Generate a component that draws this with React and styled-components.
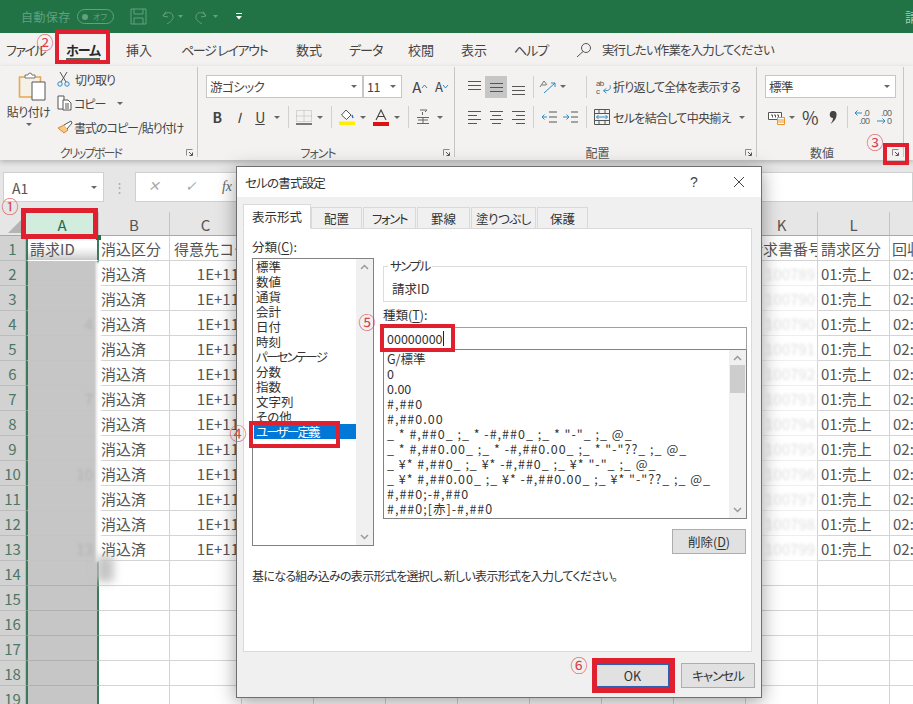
import React from 'react';
import styled, { createGlobalStyle } from 'styled-components';

const UI_FONT = '"Noto Sans CJK JP", "Noto Sans", sans-serif';

const GlobalStyle = createGlobalStyle`
    html, body {
        margin: 0;
        padding: 0;
        background: #fff;
    }
    body {
        font-family: ${UI_FONT};
        font-feature-settings: "palt";
        color: #333;
    }
`;

const Page = styled.div`
    position: relative;
    width: 913px;
    height: 704px;
    overflow: hidden;
`;

/* ---------- title bar ---------- */
const TitleBar = styled.div`
    display: flex;
    align-items: center;
    height: 33px;
    padding-left: 21px;
    box-sizing: border-box;
    background: #217346;
    color: #62a080;
    font-size: 12px;
`;

const AutoSave = styled.span`
    width: 56px;
    letter-spacing: 0.4px;
`;

const Toggle = styled.span`
    display: flex;
    align-items: center;
    gap: 5px;
    width: 37px;
    height: 15px;
    box-sizing: border-box;
    border: 1px solid #62a080;
    border-radius: 8px;
    padding-left: 4px;
    font-size: 8px;
    &::before {
        content: '';
        width: 6px;
        height: 6px;
        border-radius: 50%;
        background: #62a080;
    }
`;

const TitleSlot = styled.span`
    display: flex;
    justify-content: center;
    width: ${p => p.$w}px;
`;

const DocName = styled.span`
    margin-left: auto;
    width: 8px;
    overflow: hidden;
    white-space: nowrap;
    color: #a9cdb9;
    font-size: 13px;
`;

/* ---------- ribbon tabs ---------- */
const TabBar = styled.div`
    display: flex;
    align-items: center;
    height: 33px;
    background: #f3f2f1;
    font-size: 13px;
    color: #444;
    white-space: nowrap;
`;

const RibbonTab = styled.span`
    position: relative;
    width: ${p => p.$w}px;
    padding-left: ${p => p.$pad || 0}px;
    box-sizing: border-box;
    letter-spacing: ${p => p.$ls || 0}px;
    font-weight: ${p => (p.$active ? 700 : 400)};
    color: ${p => (p.$active ? '#2a2a2a' : '#444')};
    ${p => p.$active && `
        &::after {
            content: '';
            position: absolute;
            left: 0;
            bottom: -1px;
            width: 34px;
            height: 2px;
            background: #4d6b5c;
        }
    `}
`;

const SearchHint = styled.span`
    margin-left: 10px;
    font-size: 12.5px;
    letter-spacing: -0.9px;
    color: #444;
`;

/* ---------- ribbon ---------- */
const Ribbon = styled.div`
    display: flex;
    height: 94px;
    padding-top: 1px;
    box-sizing: border-box;
    background: #f3f2f1;
    box-shadow: 0 2px 5px rgba(0, 0, 0, 0.22);
    position: relative;
`;

const Group = styled.div`
    display: flex;
    flex-direction: column;
    width: ${p => p.$w}px;
    height: 90px;
    box-sizing: border-box;
    border-right: 1px solid #c8c6c4;
`;

const GroupBody = styled.div`
    flex: 1;
    min-height: 0;
    display: ${p => (p.$split ? 'flex' : 'block')};
    padding: ${p => (p.$split ? '0' : '8px 0 0 8px')};
`;

const GroupFoot = styled.div`
    display: flex;
    align-items: center;
    height: 18px;
    margin-bottom: -4px;
    font-size: 12px;
    color: #555;
`;

const GroupLabel = styled.span`
    flex: 1;
    text-align: center;
    letter-spacing: ${p => p.$ls || 0}px;
`;

const Launcher = styled.span`
    display: flex;
    justify-content: flex-start;
    width: 16px;
    padding-left: 5px;
    box-sizing: border-box;
`;

const ToolRow = styled.div`
    display: flex;
    align-items: center;
    height: ${p => p.$h || 22}px;
    margin-top: ${p => p.$mt || 0}px;
    font-size: 12px;
    letter-spacing: -0.7px;
    color: #444;
    white-space: nowrap;
`;

const Cell = styled.span`
    display: flex;
    align-items: center;
    justify-content: center;
    flex: none;
    width: ${p => p.$w}px;
    height: 22px;
    background: ${p => (p.$on ? '#c6c6c6' : 'transparent')};
    font-size: ${p => p.$size || 13}px;
    font-weight: ${p => (p.$bold ? 700 : 400)};
    font-style: ${p => (p.$italic ? 'italic' : 'normal')};
    text-decoration: ${p => (p.$under ? 'underline' : 'none')};
    color: #444;
`;

const Caret = styled.span`
    display: inline-block;
    flex: none;
    margin-left: ${p => p.$ml || 0}px;
    border-left: 3px solid transparent;
    border-right: 3px solid transparent;
    border-top: 3px solid #666;
`;

const RowSep = styled.span`
    width: 1px;
    height: 22px;
    background: #d2d0ce;
`;

const Combo = styled.span`
    display: flex;
    align-items: center;
    flex: none;
    width: ${p => p.$w}px;
    height: 23px;
    margin-right: ${p => p.$mr || 0}px;
    padding: 0 5px 0 3px;
    box-sizing: border-box;
    border: 1px solid #c6c6c6;
    background: #fff;
    font-size: 12.5px;
    letter-spacing: -0.5px;
    color: #444;
    & > span:first-child {
        flex: 1;
    }
`;

const PasteColumn = styled.div`
    display: flex;
    flex-direction: column;
    align-items: center;
    width: 57px;
    padding-top: 5px;
    font-size: 12px;
    letter-spacing: -0.6px;
    color: #444;
    & > svg {
        margin-left: 6px;
    }
    & > span {
        margin-top: 2px;
        line-height: 18px;
    }
`;

const ClipColumn = styled.div`
    padding-top: 0;
`;

const ClipRow = styled.div`
    display: flex;
    align-items: center;
    height: 24px;
    font-size: 12px;
    letter-spacing: -1px;
    color: #444;
    white-space: nowrap;
    & > svg {
        flex: none;
        margin-right: ${p => p.$gap || 3}px;
    }
`;

/* ---------- formula bar ---------- */
const FormulaBar = styled.div`
    display: flex;
    align-items: center;
    height: 52px;
    padding: 1px 0 0 3px;
    box-sizing: border-box;
    background: #e6e6e6;
`;

const NameBox = styled.div`
    display: flex;
    align-items: center;
    justify-content: space-between;
    width: 101px;
    height: 30px;
    padding: 2px 6px 0 8px;
    box-sizing: border-box;
    border: 1px solid #d0d0d0;
    background: #fff;
    font-size: 14px;
    color: #555;
`;

const BarDots = styled.span`
    width: 31px;
    text-align: center;
    color: #aaa;
    font-size: 13px;
`;

const FormulaInput = styled.div`
    flex: 1;
    display: flex;
    align-items: center;
    height: 30px;
    box-sizing: border-box;
    border: 1px solid #d0d0d0;
    background: #fff;
`;

const FormulaButton = styled.span`
    display: flex;
    justify-content: center;
    width: ${p => p.$w}px;
    color: ${p => (p.$dark ? '#666' : '#aaa')};
    font-family: "Liberation Serif", serif;
    font-size: 14px;
    font-style: italic;
`;

/* ---------- sheet ---------- */
const Sheet = styled.div`
    display: grid;
    grid-template-columns: 26px 73px 71px repeat(11, 72px);
    grid-auto-rows: 25px;
    font-feature-settings: normal;
    font-size: 15px;
    color: #555;
    background: #fff;
`;

const ColHead = styled.div`
    height: 24px;
    line-height: 26px;
    box-sizing: border-box;
    text-align: center;
    background: ${p => (p.$active ? '#d2ecdd' : '#e6e6e6')};
    color: ${p => (p.$active ? '#1f6b47' : '#555')};
    border-right: 1px solid #c4c4c4;
    border-bottom: 1px solid #a8a8a8;
`;

const Corner = styled.div`
    position: relative;
    height: 24px;
    box-sizing: border-box;
    background: #e6e6e6;
    border-right: 1px solid #c4c4c4;
    border-bottom: 1px solid #a8a8a8;
    &::after {
        content: '';
        position: absolute;
        right: 3px;
        bottom: 2px;
        width: 14px;
        height: 14px;
        background: #b4b4b4;
        clip-path: polygon(100% 0, 100% 100%, 0 100%);
    }
`;

const RowHead = styled.div`
    box-sizing: border-box;
    line-height: 25px;
    text-align: center;
    margin-top: -1px;
    height: 25px;
    background: #d2d2d2;
    color: #4d7765;
    border-right: 1px solid #b8b8b8;
    border-bottom: 1px solid #bcbcbc;
`;

const DataCell = styled.div`
    margin-top: -1px;
    height: 25px;
    box-sizing: border-box;
    padding: 0 2px 0 ${p => p.$pad || 2}px;
    line-height: 25px;
    overflow: hidden;
    white-space: nowrap;
    text-align: ${p => (p.$right ? 'right' : 'left')};
    border-right: 1px solid #d4d4d4;
    border-bottom: 1px solid ${p => (p.$faint ? '#efefef' : '#d4d4d4')};
    color: ${p => (p.$faint ? '#e0e0e0' : '#555')};
`;

const FaintText = styled.span`
    filter: blur(1.4px);
`;

const SelectedCell = styled.div`
    margin-top: -1px;
    height: 25px;
    box-sizing: border-box;
    padding: 0 4px 0 2px;
    line-height: 25px;
    text-align: ${p => (p.$right ? 'right' : 'left')};
    border-left: 2px solid #3d7a5d;
    border-right: 2px solid #3d7a5d;
    border-bottom: 1px solid ${p => (p.$head ? 'transparent' : p.$dark ? '#b0b0b0' : '#c4c4c4')};
    background: ${p => (p.$head ? 'linear-gradient(#fff 45%, #e8e8e8 72%, #c8c8c8)' : '#c6c6c6')};
    color: ${p => (p.$head ? '#555' : '#b2b2b2')};
`;

const BlurPatch = styled.div`
    position: absolute;
    left: ${p => p.$x}px;
    top: ${p => p.$y}px;
    width: ${p => p.$w}px;
    height: ${p => p.$h}px;
    background: ${p => p.$color};
    filter: blur(${p => p.$blur}px);
    pointer-events: none;
`;

const FillHandle = styled.div`
    position: absolute;
    left: 96px;
    top: 235px;
    width: 5px;
    height: 5px;
    background: #217346;
`;

/* ---------- dialog ---------- */
const Dialog = styled.div`
    position: absolute;
    left: 236px;
    top: 166px;
    width: 526px;
    height: 532px;
    display: flex;
    flex-direction: column;
    box-sizing: border-box;
    border: 1px solid #6f6f6f;
    background: #f0f0f0;
    box-shadow: 0 4px 18px rgba(0, 0, 0, 0.38);
    font-size: 12.5px;
    color: #333;
`;

const DialogTitle = styled.div`
    display: flex;
    align-items: center;
    height: 30px;
    padding-left: 8px;
    background: #fff;
    font-size: 12.5px;
`;

const TitleText = styled.span`
    flex: 1;
    letter-spacing: -0.8px;
`;

const TitleButton = styled.span`
    display: flex;
    justify-content: center;
    width: ${p => p.$w}px;
    font-size: 14px;
    font-family: "Liberation Sans", sans-serif;
    color: #444;
`;

const TabStrip = styled.div`
    display: flex;
    align-items: flex-end;
    height: 23px;
    margin: 9px 0 -1px 6px;
    position: relative;
    z-index: 1;
`;

const DlgTab = styled.span`
    display: flex;
    align-items: center;
    justify-content: center;
    width: ${p => p.$w}px;
    height: ${p => (p.$active ? 25 : 22)}px;
    box-sizing: border-box;
    margin-right: ${p => (p.$active ? 0 : 1)}px;
    border: 1px solid #d9d9d9;
    border-bottom: ${p => (p.$active ? '1px solid #fff' : '1px solid #d9d9d9')};
    background: ${p => (p.$active ? '#fff' : '#f0f0f0')};
    font-size: 12.5px;
    letter-spacing: ${p => p.$ls || 0}px;
`;

const TabPanel = styled.div`
    height: 424px;
    margin: 0 9px 0 6px;
    padding: 9px 5px 0 8px;
    box-sizing: border-box;
    border: 1px solid #d9d9d9;
    background: #fff;
`;

const PanelColumns = styled.div`
    display: flex;
    gap: 9px;
`;

const CategoryColumn = styled.div`
    width: 122px;
    flex: none;
`;

const FormatColumn = styled.div`
    width: 364px;
    padding-top: 19px;
    flex: none;
`;

const FieldLabel = styled.div`
    height: 18px;
    margin-top: ${p => p.$mt || 0}px;
    margin-bottom: ${p => p.$mb || 0}px;
    line-height: 18px;
    font-size: 12.5px;
    & u {
        text-underline-offset: 2px;
    }
`;

const ListFrame = styled.div`
    display: flex;
    height: ${p => p.$h}px;
    box-sizing: border-box;
    border: 1px solid #828282;
    border-top: ${p => (p.$flat ? 'none' : '1px solid #828282')};
    background: #fff;
`;

const ListItems = styled.div`
    flex: 1;
    min-width: 0;
    overflow: hidden;
    padding-top: ${p => p.$pt || 0}px;
`;

const ListItem = styled.div`
    height: 15px;
    line-height: 15px;
    padding-left: ${p => p.$pad}px;
    margin-left: ${p => p.$ml || 0}px;
    font-size: 12.5px;
    letter-spacing: ${p => p.$ls || 0}px;
    white-space: nowrap;
    background: ${p => (p.$selected ? '#0078d7' : 'transparent')};
    color: ${p => (p.$selected ? '#fff' : '#333')};
`;

const ScrollBar = styled.div`
    display: flex;
    flex-direction: column;
    align-items: center;
    flex: none;
    width: 17px;
    background: #f0f0f0;
    padding: 5px 0;
    box-sizing: border-box;
`;

const ScrollThumb = styled.div`
    width: 15px;
    height: 28px;
    margin-top: 4px;
    background: #cdcdcd;
`;

const ScrollSpacer = styled.div`
    flex: 1;
`;

const SampleBox = styled.fieldset`
    height: 45px;
    margin: 0;
    padding: 5px 8px 0 8px;
    box-sizing: border-box;
    border: 1px solid #dcdcdc;
    line-height: 18px;
    font-size: 12.5px;
    & legend {
        margin-left: -4px;
        padding: 0 2px;
        line-height: 18px;
        letter-spacing: -1.5px;
    }
`;

const FormatInput = styled.div`
    display: flex;
    align-items: center;
    height: 23px;
    padding-left: 3px;
    box-sizing: border-box;
    border: 1px solid #a0a0a0;
    border-bottom: 1px solid #828282;
    background: #fff;
    font-size: 12.5px;
    font-feature-settings: normal;
    &::after {
        content: '';
        width: 1px;
        height: 15px;
        background: #222;
    }
`;

const DeleteRow = styled.div`
    display: flex;
    justify-content: flex-end;
    padding: 10px 1px 0 0;
`;

const DlgButton = styled.span`
    display: flex;
    align-items: center;
    justify-content: center;
    width: ${p => p.$w}px;
    height: 25px;
    box-sizing: border-box;
    border: ${p => (p.$primary ? '2px solid #2f5fae' : '1px solid #adadad')};
    background: #e1e1e1;
    box-shadow: ${p => (p.$primary ? 'inset 0 0 0 1px #c8e4f8' : 'none')};
    font-size: 12.5px;
    letter-spacing: ${p => p.$ls || 0}px;
    & u {
        text-underline-offset: 2px;
    }
`;

const Hint = styled.p`
    margin: 13px 0 0;
    line-height: 18px;
    font-size: 12px;
    letter-spacing: -0.7px;
`;

const DialogFoot = styled.div`
    display: flex;
    justify-content: flex-end;
    gap: 11px;
    padding: 11px 6px 0 0;
`;

/* ---------- annotations ---------- */
const RedBox = styled.div`
    position: absolute;
    left: ${p => p.$x}px;
    top: ${p => p.$y}px;
    width: ${p => p.$w}px;
    height: ${p => p.$h}px;
    box-sizing: border-box;
    border: ${p => p.$b || 4}px solid #e0202e;
    pointer-events: none;
`;

const Marker = styled.span`
    position: absolute;
    left: ${p => p.$x}px;
    top: ${p => p.$y}px;
    width: 18px;
    height: 18px;
    line-height: 18px;
    text-align: center;
    font-size: 17px;
    font-feature-settings: normal;
    color: #d8434a;
    pointer-events: none;
`;

/* ---------- icons ---------- */
const Ic = ({ w, h, children, ...rest }) => (
    <svg width={w} height={h} viewBox={`0 0 ${w} ${h}`} fill="none" {...rest}>{children}</svg>
);

const SaveIcon = () => (
    <Ic w={17} h={17}>
        <path d="M1 1h15v15H1zM4 1v5h9V1M4 16v-6h9v6" stroke="#62a080" />
    </Ic>
);
const UndoIcon = () => (
    <Ic w={16} h={16}>
        <path d="M4 7l3-4.500M4 7l5 1M4 7c2-4 9-5 10 0 .6 4-3 6-6 8" stroke="#62a080" />
    </Ic>
);
const RedoIcon = () => (
    <Ic w={16} h={16} style={{ transform: 'scaleX(-1)' }}>
        <path d="M4 7l3-4.500M4 7l5 1M4 7c2-4 9-5 10 0 .6 4-3 6-6 8" stroke="#62a080" />
    </Ic>
);
const DimCaret = () => (
    <Ic w={5} h={3}><path d="M0 0h5L2.500 3z" fill="#62a080" /></Ic>
);
const CustomizeIcon = () => (
    <Ic w={6} h={7}>
        <path d="M0 .5h6" stroke="#fff" />
        <path d="M0 3h6L3 6.500z" fill="#fff" />
    </Ic>
);
const SearchIcon = () => (
    <Ic w={16} h={16}>
        <circle cx="10" cy="6" r="4.500" stroke="#555" />
        <path d="M7 9.500l-6 5.500" stroke="#555" />
    </Ic>
);
const PasteIcon = () => (
    <Ic w={28} h={29}>
        <path d="M1.500 5h21v20h-21z" fill="#f6f1e6" stroke="#e8a84c" strokeWidth="1.600" />
        <path d="M7 6V3h3a2 2 0 0 1 4 0h3v3z" fill="#fff" stroke="#777" />
        <path d="M14 10h13v18H14z" fill="#fff" stroke="#555" />
    </Ic>
);
const ScissorsIcon = () => (
    <Ic w={13} h={16}>
        <path d="M3 1l6 10M10 1L4 11" stroke="#555" />
        <circle cx="3" cy="13" r="2.200" stroke="#2b8cc4" />
        <circle cx="10" cy="13" r="2.200" stroke="#2b8cc4" />
    </Ic>
);
const CopyIcon = () => (
    <Ic w={16} h={16}>
        <path d="M1 1h6v13H1z" fill="#fff" stroke="#555" />
        <path d="M6 5h5l3 3v7H6z" fill="#fff" stroke="#555" />
        <path d="M8 9h4M8 11h4M8 13h4" stroke="#555" />
    </Ic>
);
const BrushIcon = () => (
    <Ic w={16} h={14}>
        <path d="M1 8l6-3 4 5-4 3z" fill="#f5c98b" stroke="#d98a2b" />
        <path d="M7 5l7-4 1 2-5 6" fill="#fff" stroke="#555" />
    </Ic>
);
const LauncherIcon = () => (
    <Ic w={7} h={7}>
        <path d="M.5 6.500v-6h6" stroke="#8a8a8a" />
        <path d="M3 3l3 3M6.500 3.500v3h-3" stroke="#555" />
    </Ic>
);
const FontBigger = ({ up }) => (
    <Ic w={7} h={5}>
        <path d={up ? 'M1 4l2.500-3L6 4' : 'M1 1l2.500 3L6 1'} stroke="#2b8cc4" />
    </Ic>
);
const BorderIcon = () => (
    <Ic w={16} h={15}>
        <path d="M.5.500h15v11H.5zM8 .5v11M.5 6h15" stroke="#b5b5b5" strokeDasharray="1 1" />
        <path d="M0 14h16" stroke="#444" strokeWidth="1.400" />
    </Ic>
);
const FillIcon = () => (
    <Ic w={16} h={16}>
        <path d="M7 1l5 5-4.500 4.500L2.500 6z" fill="#fff" stroke="#555" />
        <path d="M13 6l1 3" stroke="#2b6cb0" strokeWidth="1.400" />
        <path d="M0 12.500h16V16H0z" fill="#ffee00" />
    </Ic>
);
const FontColorIcon = () => (
    <Ic w={16} h={17}>
        <path d="M3 11l5-10 5 10M5 7.500h6" stroke="#444" strokeWidth="1.100" />
        <path d="M0 13h16v4H0z" fill="#e01010" />
    </Ic>
);
const PhoneticIcon = () => (
    <Ic w={14} h={16}>
        <path d="M4 1h7l-2 2M6.500 3v3" stroke="#666" />
        <path d="M1 8.500h12M2 11h10M1 14.500h12M7 8.500v6" stroke="#666" />
    </Ic>
);
const Lines = ({ rows }) => (
    <Ic w={15} h={18}>
        {rows.map(([y, x1, x2]) => (
            <path key={y} d={`M${x1} ${y}.5H${x2}`} stroke="#555" />
        ))}
    </Ic>
);
const OrientIcon = () => (
    <Ic w={17} h={16}>
        <path d="M1 8l4-6 3 4M3 6h4" stroke="#777" />
        <path d="M5 14L16 4M16 4h-4M16 4v4" stroke="#2b8cc4" />
    </Ic>
);
const OutdentIcon = () => (
    <Ic w={15} h={14}>
        <path d="M7 2h8M7 7h8M7 12h8" stroke="#555" />
        <path d="M5 7H0M0 7l2.500-2.500M0 7l2.500 2.500" stroke="#2b8cc4" />
    </Ic>
);
const IndentIcon = () => (
    <Ic w={15} h={14}>
        <path d="M8 2h7M8 7h7M8 12h7" stroke="#555" />
        <path d="M0 7h6M6 7L3.500 4.500M6 7L3.500 9.500" stroke="#2b8cc4" />
    </Ic>
);
const WrapIcon = () => (
    <Ic w={16} h={16}>
        <text x="0" y="7" fontSize="8.500" fill="#555" fontFamily="Liberation Sans, sans-serif">ab</text>
        <text x="0" y="15" fontSize="8.500" fill="#555" fontFamily="Liberation Sans, sans-serif">c</text>
        <path d="M15 6c1 5-1 6-7 6M8 12l3-2.500M8 12l3 2.500" stroke="#2b8cc4" />
    </Ic>
);
const MergeIcon = () => (
    <Ic w={16} h={16}>
        <path d="M.5.500h15v15H.5zM.5 4.500h15M.5 11.500h15M5 .5v4M11 .5v4M5 11.500v4M11 11.500v4" stroke="#555" />
        <path d="M2.500 8h11M2.500 8l2-2M2.500 8l2 2M13.500 8l-2-2M13.500 8l-2 2" stroke="#2b8cc4" />
    </Ic>
);
const AccountingIcon = () => (
    <Ic w={17} h={15}>
        <path d="M.5 2.500h13v7H.5z" fill="#fff" stroke="#555" />
        <path d="M3 5h1.500v2.500M6 5h1.500v2.500M9 5h1.500v2.500" stroke="#555" />
        <path d="M9.500 7.500h7v7h-7z" fill="#fff" stroke="#e3962d" />
        <path d="M9.500 10h7M9.500 12h7" stroke="#e3962d" />
    </Ic>
);
const CommaIcon = () => (
    <Ic w={8} h={13}>
        <path d="M4.500 0a3.500 3.500 0 0 1 3 4c0 4-3 7-6 9 1.500-2 2.500-4 2.500-6a3.400 3.400 0 0 1 .5-7z" fill="#444" />
    </Ic>
);
const DecimalIcon = ({ more }) => (
    <Ic w={19} h={17}>
        <text x={more ? 9 : 5} y="7" fontSize="9" fill="#666" fontFamily="Liberation Sans, sans-serif">{more ? '.0' : '.00'}</text>
        <text x={more ? 5 : 11} y="15" fontSize="9" fill="#666" fontFamily="Liberation Sans, sans-serif">{more ? '.00' : '0'}</text>
        {more && <path d="M8 4H1M1 4l2.500-2.500M1 4l2.500 2.500" stroke="#2b8cc4" />}
        {!more && <path d="M1 12h8M9 12L6.500 9.500M9 12l-2.500 2.500" stroke="#2b8cc4" />}
    </Ic>
);
const ChevronIcon = ({ down }) => (
    <Ic w={9} h={6}>
        <path d={down ? 'M1 1l3.500 3.500L8 1' : 'M1 5l3.500-3.500L8 5'} stroke="#9a9a9a" strokeWidth="1.500" />
    </Ic>
);

/* ---------- data ---------- */
const COLUMNS = ['A', 'B', 'C', 'D', 'E', 'F', 'G', 'H', 'I', 'J', 'K', 'L', 'M'];
const HEADINGS = { A: '請求ID', B: '消込区分', C: '得意先コード', K: '請求書番号', L: '請求区分', M: '回収区分' };
const INVOICE_NOS = ['100789', '100790', '100790', '100791', '100792', '100793', '100794', '100795', '100796', '100797', '100798', '100799'];
const ROWS = Array.from({ length: 19 }, (_, i) => i + 1);

const CATEGORIES = ['標準', '数値', '通貨', '会計', '日付', '時刻', 'パーセンテージ', '分数', '指数', '文字列', 'その他', 'ユーザー定義'];
const FORMATS = [
    'G/標準',
    '0',
    '0.00',
    '#,##0',
    '#,##0.00',
    '_ * #,##0_ ;_ * -#,##0_ ;_ * "-"_ ;_ @_',
    '_ * #,##0.00_ ;_ * -#,##0.00_ ;_ * "-"??_ ;_ @_',
    '_ ¥* #,##0_ ;_ ¥* -#,##0_ ;_ ¥* "-"_ ;_ @_',
    '_ ¥* #,##0.00_ ;_ ¥* -#,##0.00_ ;_ ¥* "-"??_ ;_ @_',
    '#,##0;-#,##0',
    '#,##0;[赤]-#,##0',
];
const DIALOG_TABS = [['配置', 51, 0], ['フォント', 53, -1.5], ['罫線', 53, 0], ['塗りつぶし', 65, -0.5], ['保護', 51, 0]];

const renderCell = (col, row) => {
    const key = `${col}${row}`;
    const filled = row >= 2 && row <= 13;
    if (col === 'A') {
        return (
            <SelectedCell key={key} $head={row === 1} $right={row > 1} $dark={row > 13}>
                {row === 1 ? HEADINGS.A : filled && row % 3 === 1 ? <FaintText>{row}</FaintText> : ''}
            </SelectedCell>
        );
    }
    if (row === 1) return <DataCell key={key} $pad={col === 'C' ? 4 : col === 'L' ? 3 : 2}>{HEADINGS[col] || ''}</DataCell>;
    if (filled && col === 'B') return <DataCell key={key}>消込済</DataCell>;
    if (filled && col === 'C') return <DataCell key={key} $right>1E+11</DataCell>;
    if (filled && col === 'K') {
        return <DataCell key={key} $right $faint><FaintText>{INVOICE_NOS[row - 2]}</FaintText></DataCell>;
    }
    if (filled && col === 'L') return <DataCell key={key} $pad={3}>01:売上</DataCell>;
    if (filled && col === 'M') return <DataCell key={key} $pad={3}>02:回収</DataCell>;
    return <DataCell key={key} />;
};

const App = () => (
    <Page>
        <GlobalStyle />

        <TitleBar>
            <AutoSave>自動保存</AutoSave>
            <Toggle>オフ</Toggle>
            <TitleSlot $w={16} />
            <SaveIcon />
            <TitleSlot $w={12} />
            <UndoIcon />
            <TitleSlot $w={10}><DimCaret /></TitleSlot>
            <TitleSlot $w={9} />
            <RedoIcon />
            <TitleSlot $w={10}><DimCaret /></TitleSlot>
            <TitleSlot $w={16} />
            <CustomizeIcon />
            <DocName>請求データ</DocName>
        </TitleBar>

        <TabBar>
            <RibbonTab $w={66} $pad={6} $ls={-1.5}>ファイル</RibbonTab>
            <RibbonTab $w={60} $active $ls={-1}>ホーム</RibbonTab>
            <RibbonTab $w={55}>挿入</RibbonTab>
            <RibbonTab $w={115} $ls={-1.3}>ページ レイアウト</RibbonTab>
            <RibbonTab $w={53}>数式</RibbonTab>
            <RibbonTab $w={59} $ls={-1}>データ</RibbonTab>
            <RibbonTab $w={53}>校閲</RibbonTab>
            <RibbonTab $w={53}>表示</RibbonTab>
            <RibbonTab $w={62} $ls={-1}>ヘルプ</RibbonTab>
            <SearchIcon />
            <SearchHint>実行したい作業を入力してください</SearchHint>
        </TabBar>

        <Ribbon>
            <Group $w={198}>
                <GroupBody $split>
                    <PasteColumn>
                        <PasteIcon />
                        <span>貼り付け</span>
                        <Caret />
                    </PasteColumn>
                    <ClipColumn>
                        <ClipRow $gap={5}><ScissorsIcon />切り取り</ClipRow>
                        <ClipRow $gap={1}><CopyIcon />コピー<Caret $ml={12} /></ClipRow>
                        <ClipRow $gap={1}><BrushIcon />書式のコピー/貼り付け</ClipRow>
                    </ClipColumn>
                </GroupBody>
                <GroupFoot>
                    <GroupLabel $ls={-1.8}>クリップボード</GroupLabel>
                    <Launcher><LauncherIcon /></Launcher>
                </GroupFoot>
            </Group>

            <Group $w={257}>
                <GroupBody>
                    <ToolRow $h={23}>
                        <Combo $w={157}><span>游ゴシック</span><Caret /></Combo>
                        <Combo $w={39} $mr={7}><span>11</span><Caret /></Combo>
                        <Cell $w={22} $size={15}>A<FontBigger up /></Cell>
                        <Cell $w={22} $size={13}>A<FontBigger /></Cell>
                    </ToolRow>
                    <ToolRow $mt={8}>
                        <Cell $w={22} $bold $size={14}>B</Cell>
                        <Cell $w={21} $italic $size={14}>I</Cell>
                        <Cell $w={22} $under $size={14}>U</Cell>
                        <Cell $w={12}><Caret /></Cell>
                        <Cell $w={10}><RowSep /></Cell>
                        <Cell $w={21}><BorderIcon /></Cell>
                        <Cell $w={12}><Caret /></Cell>
                        <Cell $w={10}><RowSep /></Cell>
                        <Cell $w={22}><FillIcon /></Cell>
                        <Cell $w={10}><Caret /></Cell>
                        <Cell $w={26}><FontColorIcon /></Cell>
                        <Cell $w={6}><Caret /></Cell>
                        <Cell $w={16}><RowSep /></Cell>
                        <Cell $w={14}><PhoneticIcon /></Cell>
                        <Cell $w={20}><Caret /></Cell>
                    </ToolRow>
                </GroupBody>
                <GroupFoot>
                    <GroupLabel $ls={-1}>フォント</GroupLabel>
                    <Launcher><LauncherIcon /></Launcher>
                </GroupFoot>
            </Group>

            <Group $w={302}>
                <GroupBody>
                    <ToolRow $h={23}>
                        <Cell $w={22}><Lines rows={[[3, 1, 14], [7, 1, 14], [11, 1, 14]]} /></Cell>
                        <Cell $w={22} $on><Lines rows={[[5, 1, 14], [9, 1, 14], [13, 1, 14]]} /></Cell>
                        <Cell $w={22}><Lines rows={[[8, 1, 14], [12, 1, 14], [16, 1, 14]]} /></Cell>
                        <Cell $w={8}><RowSep /></Cell>
                        <Cell $w={21}><OrientIcon /></Cell>
                        <Cell $w={10}><Caret /></Cell>
                        <Cell $w={8} />
                        <Cell $w={20}><RowSep /></Cell>
                        <Cell $w={15}><WrapIcon /></Cell>
                        <Cell $w={2} />
                        折り返して全体を表示する
                    </ToolRow>
                    <ToolRow $mt={8}>
                        <Cell $w={22}><Lines rows={[[3, 1, 14], [7, 1, 10], [11, 1, 14], [15, 1, 10]]} /></Cell>
                        <Cell $w={22}><Lines rows={[[3, 1, 14], [7, 3, 12], [11, 1, 14], [15, 3, 12]]} /></Cell>
                        <Cell $w={22}><Lines rows={[[3, 1, 14], [7, 5, 14], [11, 1, 14], [15, 5, 14]]} /></Cell>
                        <Cell $w={8}><RowSep /></Cell>
                        <Cell $w={24}><OutdentIcon /></Cell>
                        <Cell $w={19}><IndentIcon /></Cell>
                        <Cell $w={12}><RowSep /></Cell>
                        <Cell $w={19}><MergeIcon /></Cell>
                        <Cell $w={2} />
                        セルを結合して中央揃え
                        <Caret $ml={8} />
                    </ToolRow>
                </GroupBody>
                <GroupFoot>
                    <GroupLabel>配置</GroupLabel>
                    <Launcher><LauncherIcon /></Launcher>
                </GroupFoot>
            </Group>

            <Group $w={147}>
                <GroupBody>
                    <ToolRow $h={23}>
                        <Combo $w={131}><span>標準</span><Caret /></Combo>
                    </ToolRow>
                    <ToolRow $mt={8}>
                        <Cell $w={22}><AccountingIcon /></Cell>
                        <Cell $w={10}><Caret /></Cell>
                        <Cell $w={26} $size={18}>%</Cell>
                        <Cell $w={19}><CommaIcon /></Cell>
                        <Cell $w={10}><RowSep /></Cell>
                        <Cell $w={23}><DecimalIcon more /></Cell>
                        <Cell $w={20}><DecimalIcon /></Cell>
                    </ToolRow>
                </GroupBody>
                <GroupFoot>
                    <GroupLabel>数値</GroupLabel>
                    <Launcher><LauncherIcon /></Launcher>
                </GroupFoot>
            </Group>
        </Ribbon>

        <FormulaBar>
            <NameBox>A1<Caret /></NameBox>
            <BarDots>⋮</BarDots>
            <FormulaInput>
                <FormulaButton $w={36}>✕</FormulaButton>
                <FormulaButton $w={37}>✓</FormulaButton>
                <FormulaButton $w={36} $dark>fx</FormulaButton>
            </FormulaInput>
        </FormulaBar>

        <Sheet>
            <Corner />
            {COLUMNS.map(col => <ColHead key={col} $active={col === 'A'}>{col}</ColHead>)}
            {ROWS.map(row => (
                <React.Fragment key={row}>
                    <RowHead>{row}</RowHead>
                    {COLUMNS.map(col => renderCell(col, row))}
                </React.Fragment>
            ))}
        </Sheet>

        <BlurPatch $x={96} $y={262} $w={5} $h={300} $color="#fff" $blur={1} />
        <BlurPatch $x={96} $y={556} $w={18} $h={26} $color="#c6c6c6" $blur={4} />
        <FillHandle />

        <Dialog>
            <DialogTitle>
                <TitleText>セルの書式設定</TitleText>
                <TitleButton $w={22}>?</TitleButton>
                <TitleButton $w={23} />
                <TitleButton $w={22}>
                    <Ic w={12} h={12}><path d="M1 1l10 10M11 1L1 11" stroke="#444" /></Ic>
                </TitleButton>
                <TitleButton $w={11} />
            </DialogTitle>

            <TabStrip>
                <DlgTab $active $w={68}>表示形式</DlgTab>
                {DIALOG_TABS.map(([label, w, ls]) => <DlgTab key={label} $w={w} $ls={ls}>{label}</DlgTab>)}
            </TabStrip>

            <TabPanel>
                <PanelColumns>
                    <CategoryColumn>
                        <FieldLabel $mb={2}>分類(<u>C</u>):</FieldLabel>
                        <ListFrame $h={288}>
                            <ListItems>
                                {CATEGORIES.map(name => (
                                    <ListItem
                                        key={name}
                                        $pad={name === 'ユーザー定義' ? 2 : 3}
                                        $ml={name === 'ユーザー定義' ? 1 : 0}
                                        $ls={/[ァ-ヶー]/.test(name) ? -1.8 : 0}
                                        $selected={name === 'ユーザー定義'}
                                    >
                                        {name}
                                    </ListItem>
                                ))}
                            </ListItems>
                            <ScrollBar>
                                <ChevronIcon />
                                <ScrollSpacer />
                                <ChevronIcon down />
                            </ScrollBar>
                        </ListFrame>
                    </CategoryColumn>
                    <FormatColumn>
                        <SampleBox>
                            <legend>サンプル</legend>
                            請求ID
                        </SampleBox>
                        <FieldLabel $mt={4} $mb={3}>種類(<u>T</u>):</FieldLabel>
                        <FormatInput>00000000</FormatInput>
                        <ListFrame $h={169} $flat>
                            <ListItems $pt={1}>
                                {FORMATS.map(text => <ListItem key={text} $pad={3} $ls={text.includes('#') ? 1 : 0}>{text}</ListItem>)}
                            </ListItems>
                            <ScrollBar>
                                <ChevronIcon />
                                <ScrollThumb />
                                <ScrollSpacer />
                                <ChevronIcon down />
                            </ScrollBar>
                        </ListFrame>
                        <DeleteRow>
                            <DlgButton $w={74}>削除(<u>D</u>)</DlgButton>
                        </DeleteRow>
                    </FormatColumn>
                </PanelColumns>
                <Hint>基になる組み込みの表示形式を選択し、新しい表示形式を入力してください。</Hint>
            </TabPanel>

            <DialogFoot>
                <DlgButton $w={75} $primary>OK</DlgButton>
                <DlgButton $w={74} $ls={-1}>キャンセル</DlgButton>
            </DialogFoot>
        </Dialog>

        <RedBox $x={55} $y={30} $w={55} $h={34} />
        <RedBox $x={883} $y={143} $w={26} $h={22} />
        <RedBox $x={21} $y={208} $w={77} $h={31} $b={5} />
        <RedBox $x={249} $y={421} $w={91} $h={27} />
        <RedBox $x={380} $y={324} $w={75} $h={28} />
        <RedBox $x={592} $y={658} $w={83} $h={35} $b={5} />

        <Marker $x={36} $y={33}>②</Marker>
        <Marker $x={866} $y={133}>③</Marker>
        <Marker $x={1} $y={197}>①</Marker>
        <Marker $x={229} $y={424}>④</Marker>
        <Marker $x={358} $y={313}>⑤</Marker>
        <Marker $x={570} $y={656}>⑥</Marker>
    </Page>
);

export default App;
